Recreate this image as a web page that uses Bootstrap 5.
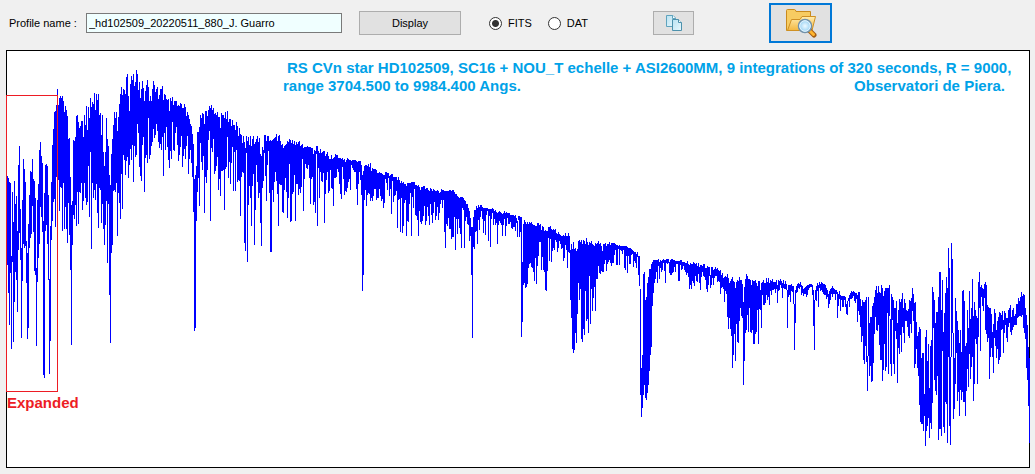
<!DOCTYPE html>
<html lang="en">
<head>
<meta charset="utf-8">
<meta name="viewport" content="width=device-width, initial-scale=1">
<title>Spectral profile</title>
<link href="https://cdn.jsdelivr.net/npm/bootstrap@5.3.0/dist/css/bootstrap.min.css" rel="stylesheet">
<style>
  body { background: #f0f0f0; color: #000; font: 11px/16px "Liberation Sans", Arial, sans-serif; }
  .toolbar { height: 50px; padding: 0 6px 4px 9px; }
  .profile-label { width: 77px; }
  .profile-input { width: 256px; height: 20px; padding: 0 2px; border: 1px solid #7a7a7a; border-radius: 0; background: #f0ffff; color: #000; font-size: 11px; line-height: 16px; }
  .profile-input:focus { background: #f0ffff; box-shadow: none; }
  .tool-btn { height: 24px; padding: 0; border: 1px solid #adadad; border-radius: 0; background: #e1e1e1; color: #000; font-size: 11px; line-height: 16px; }
  .display-btn { width: 102px; margin-left: 17px; }
  .copy-btn { width: 41px; margin-left: 65px; }
  .open-btn { width: 63px; height: 40px; margin-left: 75px; border: 2px solid #0078d7; }
  .formats { margin-left: 28px; gap: 16px; }
  .format-radio.form-check-input { width: 13px; height: 13px; margin: 0 6px 0 0; border: 1px solid #333; background: #fff; box-shadow: none; }
  .format-radio.form-check-input:checked { background: radial-gradient(circle, #333 0 3px, #fff 4px); }
  .plot { margin: 0 5px 6px 6px; border: 1px solid #000; background: #fff; }
  .plot svg { width: 100%; height: auto; overflow: visible; font: bold 15px "Liberation Sans", Arial, sans-serif; }
  .caption-text { fill: #00a2e8; }
  .zone-text { fill: #ed1c24; }
</style>
</head>
<body>
<header class="toolbar d-flex align-items-center">
  <label class="profile-label" for="profile">Profile name :</label>
  <input class="form-control profile-input" id="profile" type="text" value="_hd102509_20220511_880_J. Guarro">
  <button class="btn tool-btn display-btn" type="button">Display</button>
  <div class="formats d-flex">
    <div class="d-flex align-items-center">
      <input class="form-check-input format-radio" type="radio" name="format" id="fits" checked>
      <label for="fits">FITS</label>
    </div>
    <div class="d-flex align-items-center">
      <input class="form-check-input format-radio" type="radio" name="format" id="dat">
      <label for="dat">DAT</label>
    </div>
  </div>
  <button class="btn tool-btn copy-btn d-flex align-items-center justify-content-center" type="button" aria-label="Copy">
    <svg width="18" height="18" viewBox="0 0 18 18" aria-hidden="true">
      <defs><linearGradient id="sheet" x2="1" y2="1"><stop stop-color="#b9e2f2"/><stop offset="1" stop-color="#e8f7fc"/></linearGradient></defs>
      <path d="M1.500 1.500H8L10.500 4V12.500H1.500Z" fill="url(#sheet)" stroke="#5fa3bd"/>
      <path d="M7.500 1.500V4.500H10.500" fill="#fff" stroke="#5fa3bd"/>
      <path d="M7.500 5.500H13.500L16.500 8.500V16.500H7.500Z" fill="url(#sheet)" stroke="#4d91ac"/>
      <path d="M13.500 5.500V8.500H16.500" fill="#fff" stroke="#4d91ac"/>
    </svg>
  </button>
  <button class="btn tool-btn open-btn d-flex align-items-center justify-content-center" type="button" aria-label="Open profile">
    <svg width="32" height="30" viewBox="0 0 32 30" aria-hidden="true">
      <defs>
        <linearGradient id="folder" x2="0" y2="1"><stop stop-color="#ffedb0"/><stop offset="1" stop-color="#f3b73f"/></linearGradient>
        <radialGradient id="lens"><stop stop-color="#eefaff"/><stop offset="1" stop-color="#8fcdf2"/></radialGradient>
      </defs>
      <path d="M1.500 22.500V2.500Q1.500 1.500 2.500 1.500H9.500Q10.500 1.500 11 3.500H25.500V22.500Z" fill="#f7cc62" stroke="#c98a1c"/>
      <path d="M2.500 22.500L6.500 11.500H15L17 8.500H30.500L27 22.500Z" fill="url(#folder)" stroke="#cf9023"/>
      <path d="M24.500 22.500L29 27" stroke="#a45c12" stroke-width="5" stroke-linecap="round"/>
      <path d="M25.500 23.500L28.500 26.500" stroke="#ffb52e" stroke-width="3" stroke-linecap="round"/>
      <circle cx="20" cy="18" r="6.500" fill="url(#lens)" stroke="#7290a8" stroke-width="1.500"/>
      <circle cx="20" cy="18" r="5.300" fill="none" stroke="#eaf8ff"/>
    </svg>
  </button>
</header>

<main class="plot">
  <svg class="d-block" viewBox="7 51 1022 416" role="img" aria-label="Spectrum of HD102509">
    <path id="spectrum" stroke="#00f" stroke-width="1" fill="none" shape-rendering="crispEdges"/>
    <rect x="6.500" y="95.500" width="51" height="296" fill="none" stroke="#ed1c24" shape-rendering="crispEdges"/>
    <text class="caption-text" x="287" y="73">RS CVn star HD102509, SC16 + NOU_T echelle + ASI2600MM, 9 integrations of 320 seconds, R = 9000,</text>
    <text class="caption-text" x="283" y="91">range 3704.500 to 9984.400 Angs.</text>
    <text class="caption-text" x="1005" y="91" text-anchor="end">Observatori de Piera.</text>
    <text class="zone-text" x="7" y="408">Expanded</text>
  </svg>
</main>

<script src="https://cdn.jsdelivr.net/npm/bootstrap@5.3.0/dist/js/bootstrap.bundle.min.js"></script>
<script>
  // Flux range of each plot column: first column, then its top and bottom, and so on.
  const flux = {
    7: '176 265,178 293,182 325',
    10: '183 273,256 349,192 262,222 342,181 302,204 272,196 280,231 312,165 250,146 233',
    20: '209 260,248 338,200 281,159 244,169 248,182 246,241 283,253 339,224 328,195 248',
    30: '171 238,172 234,159 206,179 232,181 271,198 275,268 346,200 282,184 258,150 244',
    40: '142 207,156 217,163 232,221 375,193 378,165 231,164 225,166 244,195 280,279 374',
    50: '226 341,182 240,145 221,129 202,112 199,111 227,105 177,89 179,105 180,98 211',
    60: '96 187,98 188,96 231,101 183,112 229,106 207,110 229,116 243,139 203,138 235',
    70: '177 270,205 345,201 245,140 215,141 219,137 205,116 226,115 192,122 224,128 192',
    80: '126 193,121 183,121 210,137 201,115 183,125 198,106 205,130 202,107 166,118 217',
    90: '98 152,107 249,102 183,104 198,93 190,110 200,94 184,100 213,94 228,115 188',
    100: '113 190,135 223,115 204,152 229,166 245,152 225,118 201,139 263,146 204,175 295',
    110: '185 343,154 253,139 245,125 191,112 190,118 192,112 183,131 236,117 193,104 203',
    120: '94 219,87 174,95 209,89 155,90 160,94 175,77 161,74 157,96 178,111 165',
    130: '84 149,76 160,80 145,74 182,86 146,82 157,70 155,74 124,90 133,82 167',
    140: '98 176,89 181,81 145,88 137,101 192,91 158,85 155,80 163,87 118,101 159',
    150: '96 155,101 146,89 142,81 129,85 138,92 135,89 124,87 131,99 142,95 148',
    160: '89 144,89 150,86 137,100 176,94 133,95 150,99 127,100 147,99 160,111 168',
    170: '98 151,101 159,97 122,105 150,101 151,101 133,101 127,106 145,105 161,106 155',
    180: '103 147,104 136,108 167,108 156,104 149,107 159,116 146,112 136,115 174,119 159',
    190: '124 150,126 163,134 177,144 212,179 331,175 328,166 221,132 192,132 178,127 206',
    200: '115 143,118 162,113 170,114 156,124 213,111 177,111 183,116 170,110 140,106 131',
    210: '108 221,105 148,110 152,108 139,114 174,113 171,115 166,112 157,117 190,117 179',
    220: '128 196,113 171,115 171,115 170,118 210,112 169,119 167,111 137,122 178,119 162',
    230: '119 184,126 163,120 147,125 191,125 152,130 191,122 150,126 182,136 180,128 181',
    240: '134 216,135 177,143 172,136 173,142 243,148 251,136 153,141 262,137 205,145 186',
    250: '136 198,146 226,139 186,136 174,144 245,142 210,139 165,136 182,142 198,138 193',
    260: '154 223,156 246,147 188,150 181,135 153,135 176,141 201,136 165,136 151,141 193',
    270: '140 252,141 252,140 190,139 202,138 182,137 172,134 181,141 194,136 226,135 184',
    280: '141 185,145 185,144 212,148 213,146 190,145 178,144 192,141 218,142 198,139 164',
    290: '140 222,143 221,140 194,144 192,141 175,145 221,142 184,144 184,142 195,141 189',
    300: '146 193,145 187,144 159,148 211,147 179,147 164,147 168,146 169,147 165,147 178',
    310: '147 204,148 179,148 177,154 205,150 202,151 213,146 154,146 226,151 168,153 198',
    320: '149 172,153 181,152 182,151 173,151 223,156 194,154 180,152 172,156 193,159 191',
    330: '159 170,155 188,159 189,158 206,157 178,154 178,155 177,155 169,158 172,158 184',
    340: '158 194,159 199,158 167,160 179,159 195,162 191,160 192,158 188,159 182,160 179',
    350: '160 190,161 165,160 168,160 170,160 172,160 172,161 189,162 205,161 184,161 172',
    360: '161 180,165 195,175 291,171 275,166 200,165 190,165 206,166 195,164 193,167 194',
    370: '163 201,171 198,168 201,169 196,169 189,169 189,170 200,173 198,173 198,172 189',
    380: '173 196,173 201,174 199,175 208,175 203,172 179,172 183,173 190,173 178,176 196',
    390: '175 189,174 214,174 181,177 202,177 196,177 195,177 191,180 228,177 200,180 199',
    400: '183 232,181 198,183 233,182 226,184 203,184 200,186 236,183 221,183 222,183 204',
    410: '183 193,182 236,182 197,182 208,182 189,185 215,185 216,186 220,185 236,187 211',
    420: '190 222,187 224,187 221,186 216,186 206,189 225,188 221,188 207,190 216,191 225',
    430: '188 204,189 215,191 223,189 213,190 202,191 220,191 216,190 207,191 220,193 213',
    440: '192 204,189 200,190 208,190 200,191 232,191 248,191 224,191 226,191 218,190 229',
    450: '190 229,191 239,190 237,190 237,192 217,194 250,194 219,196 234,197 219,198 228',
    460: '197 234,197 248,197 208,198 210,200 248,201 221,204 217,204 224,208 225,211 241',
    470: '218 236,227 275,227 338,217 247,210 249,210 232,206 231,208 244,205 220,207 230',
    480: '205 217,205 211,207 219,208 233,208 221,208 235,208 215,208 211,209 241,209 216',
    490: '209 247,209 219,208 213,209 225,211 219,210 225,212 223,213 244,212 225,211 221',
    500: '212 223,213 225,214 236,213 225,211 219,213 236,212 226,213 218,213 224,213 224',
    510: '215 222,215 228,215 229,215 227,216 227,215 231,218 223,221 237,216 220,216 237',
    520: '217 232,217 337,262 322,224 285,220 283,222 288,224 287,222 284,224 268,222 264',
    530: '223 263,222 267,224 268,225 272,225 281,226 258,226 284,223 266,223 256,225 242',
    540: '224 242,230 270,226 257,227 270,231 272,230 290,231 291,231 271,227 238,227 261',
    550: '226 239,229 262,230 251,229 248,230 250,229 240,233 242,234 252,232 248,234 241',
    560: '235 244,236 249,236 248,235 261,236 258,233 245,236 250,236 268,233 252,236 253',
    570: '250 300,244 318,249 349,242 353,249 350,248 333,251 343,249 314,241 283,240 300',
    580: '242 289,240 339,244 342,240 329,241 335,244 291,238 321,242 319,245 333,242 276',
    590: '243 324,241 289,244 311,245 298,246 287,243 311,244 279,243 279,241 266,244 273',
    600: '243 274,246 271,251 272,244 272,244 264,243 260,246 271,244 264,244 262,242 260',
    610: '245 263,243 266,243 263,243 263,243 255,244 250,245 265,245 265,246 249,245 265',
    620: '246 250,246 251,246 254,246 250,246 268,246 270,246 256,247 273,248 256,248 264',
    630: '248 264,249 255,250 254,251 267,252 261,252 263,254 268,252 257,256 275,256 286',
    640: '289 395,368 417,355 408,274 395,272 385,300 398,297 400,283 393,277 385,269 371',
    650: '269 355,264 347,262 306,260 293,260 283,260 279,260 272,260 283,259 266,262 279',
    660: '260 268,261 272,260 270,259 263,260 271,260 283,259 263,259 264,259 263,262 273',
    670: '260 275,259 275,259 273,260 272,260 267,261 272,261 264,261 264,261 281,261 281',
    680: '260 265,260 270,262 269,262 266,262 270,263 272,263 275,261 273,264 277,265 289',
    690: '263 285,264 289,264 281,262 283,263 286,264 276,263 281,266 282,263 274,267 283',
    700: '265 290,265 277,266 272,264 276,264 277,268 280,268 289,266 292,267 285,267 276',
    710: '275 288,267 285,267 278,270 285,269 278,267 276,269 276,268 282,270 281,271 282',
    720: '270 294,275 288,273 287,278 289,277 302,276 291,277 294,274 317,278 329,283 318',
    730: '281 329,279 336,277 368,281 355,282 334,288 361,282 324,280 342,281 343,277 321',
    740: '280 308,280 316,284 318,302 385,287 361,279 333,274 330,276 315,279 332,279 308',
    750: '280 332,285 333,280 330,281 344,281 344,280 334,283 332,286 310,281 344,281 309',
    760: '290 310,283 328,282 295,280 305,283 305,283 303,278 295,282 300,278 297,283 305',
    770: '280 291,281 295,279 290,282 290,282 289,282 293,280 289,285 303,280 291,281 290',
    780: '279 285,281 288,283 298,280 288,284 289,281 289,284 290,290 328,285 297,285 295',
    790: '285 302,284 291,286 292,286 304,304 350,290 323,286 293,284 292,283 288,284 289',
    800: '282 287,285 295,286 293,289 296,288 294,287 294,286 297,285 295,285 290,284 288',
    810: '284 287,284 287,285 295,290 326,300 350,290 300,286 301,283 291,285 307,282 288',
    820: '284 291,282 290,283 292,284 294,284 295,285 295,288 299,290 297,294 308,291 304',
    830: '289 300,288 294,286 297,288 294,289 294,290 300,290 294,292 318,294 306,291 299',
    840: '295 311,296 300,296 307,296 307,296 300,297 307,304 314,301 315,298 301,295 307',
    850: '293 299,291 299,292 298,291 296,292 301,293 303,293 299,295 322,292 311,292 315',
    860: '299 327,306 342,300 336,302 360,302 364,300 346,297 362,356 391,297 356,323 376',
    870: '317 366,317 382,306 381,303 363,297 334,290 317,286 330,293 331,286 325,292 345',
    880: '293 360,285 360,288 381,296 370,291 344,288 371,288 367,288 313,288 374,285 316',
    890: '319 364,294 376,297 320,300 364,308 374,308 331,301 339,323 383,310 348,299 354',
    900: '302 335,299 352,293 327,308 333,299 343,303 321,310 321,311 327,309 336,300 338',
    910: '301 324,298 333,288 311,294 321,303 368,302 364,322 349,336 368,332 376,327 405',
    920: '329 422,358 424,353 424,353 431,394 416,337 446,330 431,361 426,344 418,388 438',
    930: '346 423,340 429,287 403,292 328,300 380,323 391,312 395,312 376,297 440,272 429',
    940: '272 429,310 436,280 351,332 427,313 433,293 402,277 404,288 443,248 357,268 426',
    950: '357 445,243 357,259 333,333 419,358 409,298 384,311 353,321 401,330 392,343 416',
    960: '330 390,352 400,291 392,290 402,301 402,346 416,343 391,310 369,328 387,291 354',
    970: '319 379,308 367,279 357,316 401,302 384,310 339,316 344,318 384,282 337,272 308',
    980: '287 351,285 297,288 306,289 311,284 298,282 330,285 334,305 342,307 338,308 379',
    990: '308 357,314 348,332 357,324 373,309 338,313 346,330 358,321 349,317 364,312 360',
    1000: '313 357,315 330,311 329,320 353,311 333,313 325,318 338,318 342,310 327,308 323',
    1010: '305 332,317 335,310 330,308 327,316 325,314 325,304 325,304 318,298 317,301 316',
    1020: '297 316,292 317,296 315,294 328,295 333,308 339,315 368,325 380,347 406,358 443'
  };
  const strokes = [];
  for (const [start, row] of Object.entries(flux)) {
    row.split(',').forEach((pair, i) => {
      const [top, bottom] = pair.split(' ');
      strokes.push(`M${Number(start) + i + 0.5} ${top}V${bottom}`);
    });
  }
  document.getElementById('spectrum').setAttribute('d', strokes.join(''));
</script>
</body>
</html>
